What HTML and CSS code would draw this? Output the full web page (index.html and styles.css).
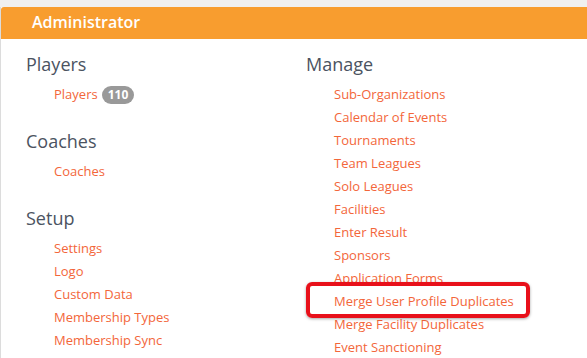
FILE: index.html
```html
<!DOCTYPE html>
<html>
<head>
<meta charset="utf-8">
<link rel="stylesheet" href="styles.css">
</head>
<body>
<div class="panel">
  <div class="panel-header">Administrator</div>
  <div class="panel-body">
    <div class="col">
      <div class="section">
        <h3 class="heading">Players</h3>
        <ul class="links">
          <li><a href="#">Players</a><span class="badge">110</span></li>
        </ul>
      </div>
      <div class="section">
        <h3 class="heading">Coaches</h3>
        <ul class="links">
          <li><a href="#">Coaches</a></li>
        </ul>
      </div>
      <div class="section">
        <h3 class="heading">Setup</h3>
        <ul class="links">
          <li><a href="#">Settings</a></li>
          <li><a href="#">Logo</a></li>
          <li><a href="#">Custom Data</a></li>
          <li><a href="#">Membership Types</a></li>
          <li><a href="#">Membership Sync</a></li>
        </ul>
      </div>
    </div>
    <div class="col">
      <div class="section">
        <h3 class="heading">Manage</h3>
        <ul class="links">
          <li><a href="#">Sub-Organizations</a></li>
          <li><a href="#">Calendar of Events</a></li>
          <li><a href="#">Tournaments</a></li>
          <li><a href="#">Team Leagues</a></li>
          <li><a href="#">Solo Leagues</a></li>
          <li><a href="#">Facilities</a></li>
          <li><a href="#">Enter Result</a></li>
          <li><a href="#">Sponsors</a></li>
          <li><a href="#">Application Forms</a></li>
          <li class="highlight"><a href="#">Merge User Profile Duplicates</a></li>
          <li><a href="#">Merge Facility Duplicates</a></li>
          <li><a href="#">Event Sanctioning</a></li>
        </ul>
      </div>
    </div>
  </div>
</div>
</body>
</html>
```

FILE: styles.css
```css
html, body {
  margin: 0;
  padding: 0;
  background: #f0f0f0;
  overflow: hidden;
}
body {
  font-family: "Open Sans", "Liberation Sans", sans-serif;
  width: 587px;
  height: 358px;
}
.panel {
  margin-top: 7px;
  background: #fff;
  border-left: 1px solid #dcdcdc;
  height: 351px;
  overflow: hidden;
}
.panel-header {
  background: #f89d2f;
  color: #fff;
  height: 32px;
  line-height: 31px;
  padding-left: 31px;
  font-size: 16px;
  font-weight: 600;
  border-top-left-radius: 3px;
}
.panel-body {
  display: grid;
  grid-template-columns: 280px 280px;
  padding: 14px 0 0 25px;
}
.section {
  margin-bottom: 24px;
}
.heading {
  margin: 0 0 8px 0;
  font-size: 18px;
  line-height: 22px;
  font-weight: 400;
  color: #4b5361;
}
.links {
  list-style: none;
  margin: 0;
  padding: 0 0 0 28px;
}
.links li {
  font-size: 13px;
  line-height: 23px;
  height: 23px;
  white-space: nowrap;
  display: flex;
  align-items: center;
}
.links a {
  color: #f3663a;
  text-decoration: none;
}
.badge {
  display: inline-block;
  margin-left: 4px;
  background: #999;
  color: #fff;
  font-weight: 700;
  font-size: 12px;
  line-height: 18px;
  height: 18px;
  padding: 0 6px;
  border-radius: 9px;
}
.highlight {
  position: relative;
}
.highlight::after {
  content: "";
  position: absolute;
  left: -28px;
  top: -8px;
  bottom: -5px;
  width: 216px;
  border: 4px solid #e8101a;
  border-radius: 6px;
  box-shadow: 0 1px 3px rgba(0, 0, 0, 0.35);
}
```
